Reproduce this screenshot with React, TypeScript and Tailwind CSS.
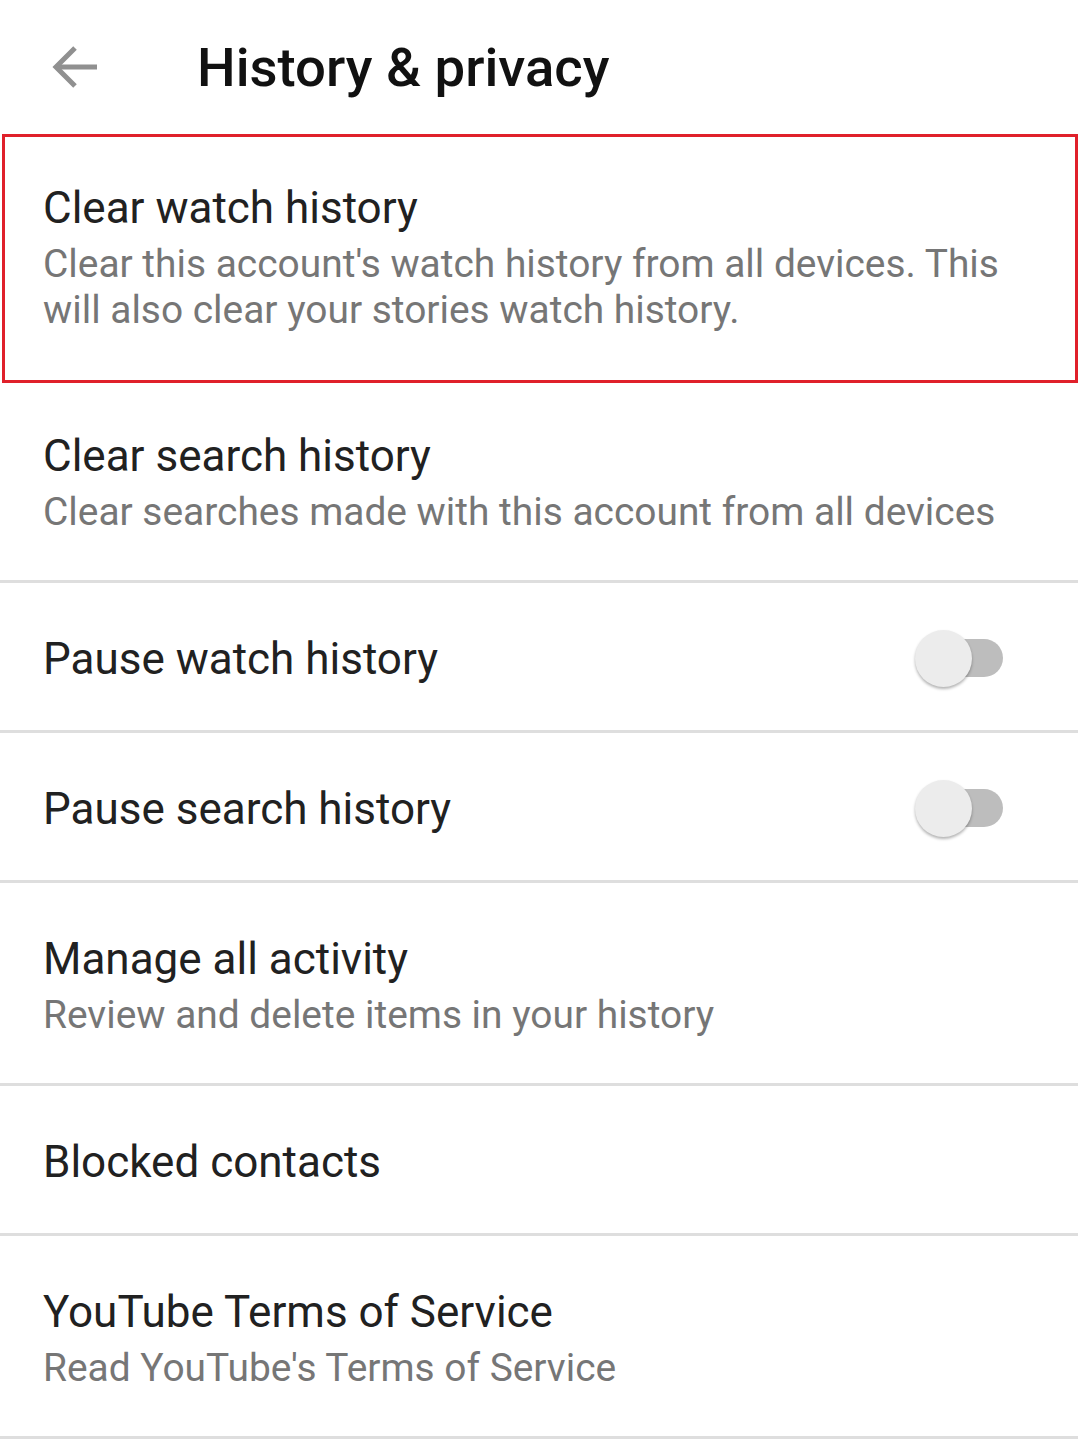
import React from "react";

type Item = {
  title: string;
  subtitle?: string;
  toggle?: boolean;
};

const items: Item[] = [
  { title: "Clear search history", subtitle: "Clear searches made with this account from all devices" },
  { title: "Pause watch history", toggle: true },
  { title: "Pause search history", toggle: true },
  { title: "Manage all activity", subtitle: "Review and delete items in your history" },
  { title: "Blocked contacts" },
  { title: "YouTube Terms of Service", subtitle: "Read YouTube's Terms of Service" },
];

// off-state switch, thumb hangs outside the 51px line box
const Toggle = () => (
  <div className="relative w-[88px] h-[51px] shrink-0">
    <div className="absolute left-[14px] right-0 top-[5px] h-[38px] rounded-full bg-[#bdbdbd]" />
    <div className="absolute left-0 top-[-4px] w-[57px] h-[57px] rounded-full bg-[#ececec] shadow-[0_2px_3px_rgba(0,0,0,0.3)]" />
  </div>
);

const Row = ({ item }: { item: Item }) => (
  <div className="flex items-center justify-between pl-[43px] pr-[75px] pt-[51px] pb-[45px] border-b-[3px] border-[#dedede]">
    <div className="flex flex-col">
      <span className="text-[44px] leading-[51px] text-[#212121]">{item.title}</span>
      {item.subtitle && (
        <span className="mt-[7px] text-[38.9px] leading-[46px] text-[#767676]">{item.subtitle}</span>
      )}
    </div>
    {item.toggle && <Toggle />}
  </div>
);

export default function App() {
  return (
    <div className="w-[1078px] bg-white font-['Roboto',sans-serif]">
      {/* header */}
      <div className="h-[134px] flex items-center">
        <div className="w-[197px] pl-[52px] flex items-center">
          <svg width="47" height="44" viewBox="0 0 47 44" fill="none">
            <path d="M45 22H4" stroke="#909090" strokeWidth="5" />
            <path d="M23 3L4 22L23 41" stroke="#909090" strokeWidth="5" />
          </svg>
        </div>
        <h1 className="text-[54.5px] font-medium text-[#111111] leading-none">History &amp; privacy</h1>
      </div>

      {/* highlighted row */}
      <div className="relative z-10 -mb-[3px] ml-[2px] border-[3px] border-[#e0202a] pl-[38px] pr-[40px] pt-[46px] pb-[47px]">
        <div className="flex flex-col">
          <span className="text-[44px] leading-[51px] text-[#212121]">Clear watch history</span>
          <span className="mt-[7px] text-[38.9px] leading-[46px] text-[#767676]">
            Clear this account's watch history from all devices. This will also clear your stories watch history.
          </span>
        </div>
      </div>

      {items.map((item) => (
        <Row key={item.title} item={item} />
      ))}
    </div>
  );
}
